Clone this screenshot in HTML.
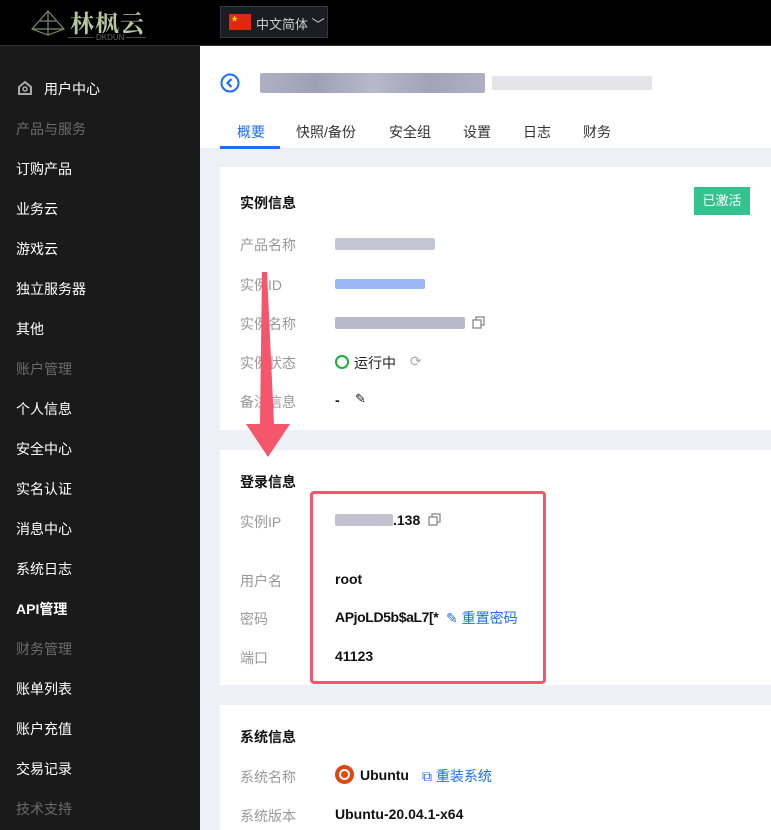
<!DOCTYPE html>
<html><head><meta charset="utf-8"><style>
*{margin:0;padding:0;box-sizing:border-box}
body{width:771px;height:830px;overflow:hidden;background:#edf0f6;font-family:"Liberation Sans","Noto Sans CJK SC",sans-serif;font-size:14px;position:relative}
.top{position:absolute;left:0;top:0;width:771px;height:46px;background:#000;border-bottom:1px solid #333}
.side{position:absolute;left:0;top:46px;width:200px;height:784px;background:#1a1a1a}
.si{position:absolute;left:16px;color:#fff;font-size:14px}
.sh{color:#6b6b6b}
.hdr{position:absolute;left:200px;top:46px;width:571px;height:102px;background:#fff}
.card{position:absolute;left:220px;width:551px;background:#fff}
.t{position:absolute;left:20px;font-weight:bold;color:#111;font-size:14px}
.l{position:absolute;left:20px;color:#999;font-size:14px}
.v{position:absolute;left:115px;color:#111;font-size:14px;font-weight:bold}
.blur{position:absolute;height:12px;border-radius:2px}
.tab{position:absolute;top:76px;font-size:14px;color:#333}
</style></head><body>
<div class="top">
 <svg style="position:absolute;left:30px;top:9px" width="36" height="28" viewBox="0 0 36 28"><path d="M18 2 L2 20 L18 26 L34 20 Z M18 2 L18 26 M2 20 L34 20 M10 12 L26 12" fill="none" stroke="#7d8a6d" stroke-width="1.2"/></svg>
 <div style="position:absolute;left:70px;top:4px;color:#b8c79e;font-size:24px;font-weight:bold;font-family:'Noto Serif CJK SC',serif;letter-spacing:1px">林枫云</div>
 <div style="position:absolute;left:68px;top:37px;width:78px;border-top:1px solid #444"></div>
 <div style="position:absolute;left:94px;top:33px;color:#666;font-size:8px;background:#000;padding:0 2px;line-height:9px">DKDUN</div>
 <div style="position:absolute;left:220px;top:6px;width:108px;height:32px;background:#1b1d22;border:1px solid #34373d">
  <div style="position:absolute;left:8px;top:7px;width:22px;height:16px;background:#de2910"><span style="position:absolute;left:2px;top:0;color:#ffde00;font-size:7px">★</span></div>
  <div style="position:absolute;left:35px;top:7px;color:#ccc;font-size:13px">中文简体 ﹀</div>
 </div>
</div>
<div class="side">
 <svg style="position:absolute;left:17px;top:34px" width="16" height="16" viewBox="0 0 16 16"><path d="M2 7 L8 2 L14 7 L14 14 L2 14 Z" fill="none" stroke="#aaa" stroke-width="2"/><circle cx="8" cy="9" r="2" fill="none" stroke="#aaa" stroke-width="1.5"/></svg>
 <div class="si" style="left:44px;top:33px">用户中心</div>
 <div class="si sh" style="top:73px">产品与服务</div>
 <div class="si" style="top:113px">订购产品</div>
 <div class="si" style="top:153px">业务云</div>
 <div class="si" style="top:193px">游戏云</div>
 <div class="si" style="top:233px">独立服务器</div>
 <div class="si" style="top:273px">其他</div>
 <div class="si sh" style="top:313px">账户管理</div>
 <div class="si" style="top:353px">个人信息</div>
 <div class="si" style="top:393px">安全中心</div>
 <div class="si" style="top:433px">实名认证</div>
 <div class="si" style="top:473px">消息中心</div>
 <div class="si" style="top:513px">系统日志</div>
 <div class="si" style="top:553px;font-weight:bold">API管理</div>
 <div class="si sh" style="top:593px">财务管理</div>
 <div class="si" style="top:633px">账单列表</div>
 <div class="si" style="top:673px">账户充值</div>
 <div class="si" style="top:713px">交易记录</div>
 <div class="si sh" style="top:753px">技术支持</div>
</div>
<div class="hdr">
 <svg style="position:absolute;left:20px;top:27px" width="20" height="20" viewBox="0 0 20 20"><circle cx="10" cy="10" r="8.5" fill="none" stroke="#1d6cf5" stroke-width="2"/><path d="M11.5 6 L7.5 10 L11.5 14" fill="none" stroke="#1d6cf5" stroke-width="2.2"/></svg>
 <div class="blur" style="left:60px;top:27px;width:225px;height:20px;background:linear-gradient(90deg,#9a9cb3,#8689a3,#a5a8bc,#8a8ca6,#9a9cb3);opacity:.8"></div>
 <div class="blur" style="left:292px;top:30px;width:160px;height:14px;background:#e4e4e8"></div>
 <div class="tab" style="left:37px;color:#1d6cf5">概要</div>
 <div class="tab" style="left:96px">快照/备份</div>
 <div class="tab" style="left:189px">安全组</div>
 <div class="tab" style="left:263px">设置</div>
 <div class="tab" style="left:323px">日志</div>
 <div class="tab" style="left:383px">财务</div>
 <div style="position:absolute;left:20px;top:100px;width:60px;height:3px;background:#1d6cf5"></div>
</div>
<div class="card" style="top:167px;height:263px">
 <div class="t" style="top:26px">实例信息</div>
 <div style="position:absolute;left:474px;top:20px;width:56px;height:28px;background:#34c38f;color:#fff;font-size:13px;text-align:center;line-height:28px">已激活</div>
 <div class="l" style="top:68px">产品名称</div>
 <div class="blur" style="left:115px;top:71px;width:100px;background:#c5c6d3"></div>
 <div class="l" style="top:108px">实例ID</div>
 <div class="blur" style="left:115px;top:112px;width:90px;height:10px;background:#9bb7f5"></div>
 <div class="l" style="top:147px">实例名称</div>
 <div class="blur" style="left:115px;top:150px;width:130px;background:#b8b9c9"></div>
 <svg style="position:absolute;left:252px;top:149px" width="13" height="13" viewBox="0 0 13 13"><rect x="1" y="4" width="8" height="8" fill="none" stroke="#888" stroke-width="1.3"/><path d="M4 4 V1 H12 V9 H9" fill="none" stroke="#888" stroke-width="1.3"/></svg>
 <div class="l" style="top:186px">实例状态</div>
 <div style="position:absolute;left:115px;top:188px;width:14px;height:14px;border:2px solid #17b03a;border-radius:50%"></div>
 <div style="position:absolute;left:134px;top:186px;color:#222">运行中</div>
 <div style="position:absolute;left:190px;top:186px;color:#aaa;font-size:14px">⟳</div>
 <div class="l" style="top:225px">备注信息</div>
 <div class="v" style="top:225px">-</div>
 <div style="position:absolute;left:135px;top:224px;color:#222;font-size:13px">✎</div>
</div>
<div class="card" style="top:450px;height:235px">
 <div class="t" style="top:22px">登录信息</div>
 <div class="l" style="top:62px">实例IP</div>
 <div class="blur" style="left:115px;top:64px;width:58px;background:#c2c2d0"></div>
 <div class="v" style="left:173px;top:62px">.138</div>
 <svg style="position:absolute;left:208px;top:63px" width="13" height="13" viewBox="0 0 13 13"><rect x="1" y="4" width="8" height="8" fill="none" stroke="#888" stroke-width="1.3"/><path d="M4 4 V1 H12 V9 H9" fill="none" stroke="#888" stroke-width="1.3"/></svg>
 <div class="l" style="top:121px">用户名</div>
 <div class="v" style="top:121px">root</div>
 <div class="l" style="top:159px">密码</div>
 <div class="v" style="top:159px;letter-spacing:-0.4px">APjoLD5b$aL7[*</div>
 <div style="position:absolute;left:226px;top:158px;color:#1d6cf5">✎ 重置密码</div>
 <div class="l" style="top:198px">端口</div>
 <div class="v" style="top:198px">41123</div>
</div>
<div class="card" style="top:705px;height:125px">
 <div class="t" style="top:22px">系统信息</div>
 <div class="l" style="top:62px">系统名称</div>
 <div style="position:absolute;left:115px;top:60px;width:19px;height:19px;border-radius:50%;background:#dd4814"><div style="position:absolute;left:4px;top:4px;width:11px;height:11px;border:2px solid #fff;border-radius:50%"></div></div>
 <div class="v" style="left:140px;top:62px">Ubuntu</div>
 <div style="position:absolute;left:202px;top:61px;color:#1d6cf5">⧉ 重装系统</div>
 <div class="l" style="top:101px">系统版本</div>
 <div class="v" style="top:101px">Ubuntu-20.04.1-x64</div>
</div>
<div style="position:absolute;left:310px;top:491px;width:236px;height:193px;border:3px solid #f5566b;border-radius:4px"></div>
<svg style="position:absolute;left:0;top:0" width="771" height="830"><path d="M262 272 L267 272 L274 424 L290 424 L268 457 L246 424 L260 424 Z" fill="#f5566b"/></svg>
</body></html>
